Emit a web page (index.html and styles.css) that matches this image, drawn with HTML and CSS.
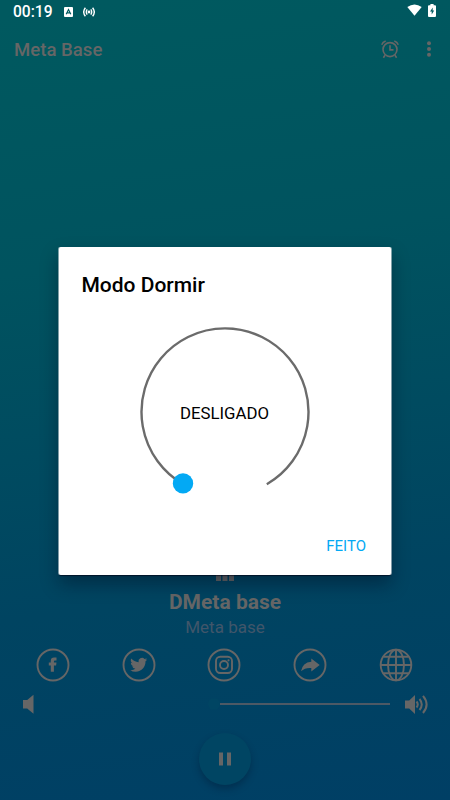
FILE: index.html
```html
<!DOCTYPE html>
<html lang="pt">
<head>
<meta charset="utf-8">
<title>Meta Base</title>
<link rel="stylesheet" href="styles.css">
</head>
<body>
<div class="screen">
  <header class="status">
    <span class="clock">00:19</span>
    <svg class="keyboard" width="9" height="10" viewBox="0 0 9 10"><rect width="9" height="10" rx="1" fill="#fff"/><path d="M2.2 7.2 4.5 2.5 6.8 7.2M3.2 5.8h2.6" fill="none" stroke="#00595f" stroke-width="1.2"/></svg>
    <svg class="cast" width="12" height="10" viewBox="0 0 12 10" fill="none" stroke="#fff" stroke-width="1.4"><circle cx="6" cy="5" r="1.4" fill="#fff" stroke="none"/><path d="M4.2 2.4Q2.4 5 4.2 7.6M7.8 2.4Q9.6 5 7.8 7.6M2.4 .8Q-1 5 2.4 9.2M9.6 .8Q13 5 9.6 9.2"/></svg>
    <svg class="wifi" width="15" height="12" viewBox="0 0 15 12"><path d="M.3 3Q7.5-2.2 14.7 3L7.5 11.7Z" fill="#fff"/></svg>
    <svg width="8" height="13" viewBox="0 0 8 13"><path d="M2.4 0h3.2v1.3H7q1 0 1 1V12q0 1-1 1H1q-1 0-1-1V2.3q0-1 1-1h1.4Z" fill="#fff"/><path d="M4.8 3.5 2 7.5h1.7v3L6.2 6.4H4.6Z" fill="#00595f"/></svg>
  </header>
  <div class="appbar">
    <h1 class="app-title">Meta Base</h1>
    <svg class="alarm" width="18" height="19" viewBox="0 0 18 19" fill="none" stroke="#666" stroke-width="1.6"><circle cx="9" cy="9.6" r="7"/><path d="M9 5.2v4.7h3.5M.7 4.8Q1.8 2.2 4.7 1.1M17.3 4.8Q16.2 2.2 13.3 1.1M4 15.3l-1.6 2.5M14 15.3l1.6 2.5"/></svg>
    <svg width="4" height="16" viewBox="0 0 4 16" fill="#666"><circle cx="2" cy="2.2" r="2"/><circle cx="2" cy="8" r="2"/><circle cx="2" cy="13.8" r="2"/></svg>
  </div>
  <main class="player">
    <svg width="18" height="18" viewBox="0 0 18 18" fill="#666"><path d="M0 8h5v10H0zM6.5 1h5v17h-5zM13 5h5v13h-5z"/></svg>
    <h2 class="track">DMeta base</h2>
    <p class="station">Meta base</p>
    <nav class="social">
      <svg class="ring" viewBox="0 0 34 34"><circle class="line" cx="17" cy="17" r="15.5"/><path d="M14.8 23.7v-6.2h-2v-3h2v-1.8q0-3.2 3.3-3.2h2.4v2.9h-1.6q-1 0-1 1v1.1h2.6l-.4 3h-2.2v6.2Z"/></svg>
      <svg class="ring" viewBox="0 0 34 34"><circle class="line" cx="17" cy="17" r="15.5"/><path transform="translate(8.2 8.3) scale(.71)" d="M23.95 4.57a10 10 0 0 1-2.82.77 4.96 4.96 0 0 0 2.16-2.72c-.95.56-2 .96-3.13 1.18a4.92 4.92 0 0 0-8.38 4.48A13.9 13.9 0 0 1 1.64 3.16a4.92 4.92 0 0 0 1.52 6.57 4.9 4.9 0 0 1-2.23-.61v.06a4.92 4.92 0 0 0 3.95 4.83 5 5 0 0 1-2.21.08 4.94 4.94 0 0 0 4.6 3.42A9.87 9.87 0 0 1 0 19.54a13.94 13.94 0 0 0 7.55 2.21c9.06 0 14.01-7.5 14.01-13.98v-.64a9.94 9.94 0 0 0 2.39-2.56Z"/></svg>
      <svg class="ring" viewBox="0 0 34 34"><circle class="line" cx="17" cy="17" r="15.5"/><g class="line"><rect x="9" y="8.8" width="16" height="16.2" rx="4.2"/><circle cx="17" cy="17" r="4"/></g><circle cx="21.5" cy="12.3" r="1.1"/></svg>
      <svg class="ring" viewBox="0 0 34 34"><circle class="line" cx="17" cy="17" r="15.5"/><path d="M8 23.3Q9.5 14.3 18.3 13.7V10.4l8.4 6.6-8.4 6.5V20Q12 19.5 8 23.3Z"/></svg>
      <svg class="ring" viewBox="0 0 34 34"><g class="line"><circle cx="17" cy="17" r="15.3"/><ellipse cx="17" cy="17" rx="8" ry="15.3"/><path d="M17 1.5v31M1.5 17h31M4.5 8.8h25M4.5 25.2h25"/></g></svg>
    </nav>
    <div class="volume">
      <svg width="11" height="20" viewBox="0 0 11 20" fill="#666"><path d="M0 6h4.2L10.5 .7v19L4.2 14.4H0Z"/></svg>
      <div class="slider"><span class="thumb"></span><span class="rest"></span></div>
      <svg width="24" height="20" viewBox="0 0 24 20"><path d="M0 6.5h4.2L10 1v19L4.2 14.5H0Z" fill="#666"/><path d="M11.5 7.5Q14 10.5 11.5 13.5M14.5 5Q19 10.5 14.5 16M18 1.8Q25.2 10.5 18 19" fill="none" stroke="#666" stroke-width="2"/></svg>
    </div>
    <div class="play"><svg width="12" height="14" viewBox="0 0 12 14" fill="#666"><path d="M0 .5h4v13H0zM8 .5h4v13H8z"/></svg></div>
  </main>
  <section class="dialog">
    <h2 class="dialog-title">Modo Dormir</h2>
    <div class="dial">
      <svg width="180" height="180" viewBox="0 0 180 180"><path d="M48.2 162.2A83.5 83.5 0 1 1 131.8 162.2" fill="none" stroke="#6b6b6b" stroke-width="2.4"/><circle cx="48" cy="161.4" r="10.2" fill="#03a9f4"/></svg>
      <span class="dial-label">DESLIGADO</span>
    </div>
    <div class="done">FEITO</div>
  </section>
</div>
</body>
</html>
```
FILE: styles.css
```css
* { box-sizing: border-box; }
body { margin: 0; font-family: Roboto, sans-serif; }
h1, h2, p { margin: 0; }
svg { display: block; flex: none; }
.screen {
  position: relative;
  display: flex;
  flex-direction: column;
  width: 450px;
  height: 800px;
  overflow: hidden;
  color: #666;
  background: linear-gradient(172deg, #00595f 2%, #00535f 32%, #004461 72%, #003f65 100%);
}
.status { display: flex; align-items: center; height: 23px; padding: 0 14px 0 13px; color: #fff; }
.clock { font-size: 15.6px; font-weight: 500; line-height: 23px; width: 51px; padding-top: 1px; white-space: nowrap; }
.cast { margin-left: 10px; }
.wifi { margin: -3px 6px 0 auto; }
.status svg:last-child { margin-top: -2px; }
.appbar { display: flex; align-items: center; height: 52px; padding: 0 19px 0 14px; }
.app-title { font-size: 18.6px; font-weight: 500; line-height: 24px; padding-top: 1px; }
.alarm { margin: 0 28px 0 auto; }
.player { display: flex; flex-direction: column; align-items: center; margin-top: auto; padding-bottom: 15px; }
.track { margin-top: 9px; font-size: 21px; font-weight: 700; line-height: 25px; }
.station { margin-top: 2px; font-size: 17px; line-height: 20px; color: #40566a; }
.social { display: grid; grid-template-columns: repeat(5, 1fr); justify-items: center; width: 429px; margin: 11px 1px 0 0; }
.ring { width: 34px; height: 34px; fill: #666; }
.line { fill: none; stroke: #666; stroke-width: 1.9; }
.volume { display: flex; align-items: center; width: 100%; height: 24px; margin-top: 10px; padding: 0 21px 0 23px; }
.slider { display: flex; align-items: center; flex: 1; margin: 0 15px 0 174px; }
.thumb { width: 12px; height: 12px; border-radius: 50%; background: #004563; }
.rest { flex: 1; height: 1.5px; background: #4d5965; }
.play {
  display: flex;
  align-items: center;
  justify-content: center;
  width: 52px;
  height: 52px;
  margin-top: 17px;
  border-radius: 50%;
  background: #004563;
  box-shadow: 0 4px 7px rgba(0, 20, 45, .35);
}
.dialog {
  position: absolute;
  left: 59px;
  top: 247px;
  width: 332px;
  height: 328px;
  display: flex;
  flex-direction: column;
  border-radius: 2px;
  background: #fff;
  color: #000;
  box-shadow: -1px 0 rgba(255, 255, 255, .5), 1px 0 rgba(255, 255, 255, .5), 0 1px 1px rgba(0, 0, 20, .6), 0 9px 18px rgba(0, 10, 30, .4);
}
.dialog-title { margin: 26px 0 0 22.5px; font-size: 21px; font-weight: 500; line-height: 25px; }
.dial { display: grid; place-items: center; width: 180px; height: 180px; margin: 24px auto 0; }
.dial > * { grid-area: 1 / 1; }
.dial-label { font-size: 16.8px; margin: 1px 1px 0 0; line-height: 20px; }
.done { margin: 34px 25px 0 auto; font-size: 15px; line-height: 20px; color: #03a9f4; }
```
